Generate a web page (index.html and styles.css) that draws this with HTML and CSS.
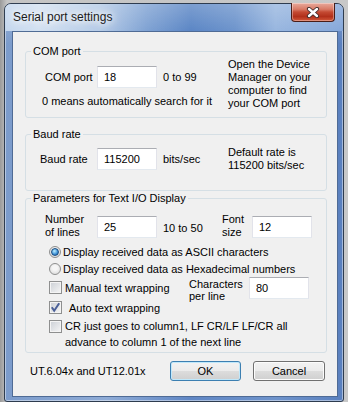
FILE: index.html
```html
<!DOCTYPE html>
<html lang="en">
<head>
  <meta charset="UTF-8" />
  <title>Serial port settings</title>
  <link rel="stylesheet" href="styles.css">
</head>
<body>

  <div class="window">
    <div class="titlebar">
      <span class="title">Serial port settings</span>
      <span class="close">
        <svg width="14" height="11" viewBox="0 0 14 11">
          <path d="M3 2 L11 9 M11 2 L3 9" stroke="#3d2a2a" stroke-width="4.2" stroke-linecap="round"/>
          <path d="M3 2 L11 9 M11 2 L3 9" stroke="#fff" stroke-width="2.4" stroke-linecap="round"/>
        </svg>
      </span>
    </div>

    <div class="client">

      <!-- COM port -->
      <fieldset class="group group-com">
        <legend>COM port</legend>
        <div class="cols">
          <div class="left">
            <div class="row row-com">
              <span class="lbl lbl-com">COM port</span>
              <span class="edit">18</span>
              <span class="hint">0 to 99</span>
            </div>
            <p class="note">0 means automatically search for it</p>
          </div>
          <p class="side">Open the Device<br>Manager on your<br>computer to find<br>your COM port</p>
        </div>
      </fieldset>

      <!-- Baud rate -->
      <fieldset class="group group-baud">
        <legend>Baud rate</legend>
        <div class="cols">
          <div class="left">
            <div class="row row-baud">
              <span class="lbl lbl-baud">Baud rate</span>
              <span class="edit">115200</span>
              <span class="hint">bits/sec</span>
            </div>
          </div>
          <p class="side side-baud">Default rate is<br>115200 bits/sec</p>
        </div>
      </fieldset>

      <!-- Text I/O -->
      <fieldset class="group group-text">
        <legend>Parameters for Text I/O Display</legend>

        <div class="row row-lines">
          <span class="lbl lbl-lines">Number<br>of lines</span>
          <span class="edit edit-mid">25</span>
          <span class="hint hint-lines">10 to 50</span>
          <span class="lbl lbl-font">Font<br>size</span>
          <span class="edit edit-mid">12</span>
        </div>

        <div class="option">
          <span class="radio checked"></span>
          <span class="opt-text">Display received data as ASCII characters</span>
        </div>
        <div class="option">
          <span class="radio"></span>
          <span class="opt-text">Display received data as Hexadecimal numbers</span>
        </div>

        <div class="row row-wrap">
          <div class="option option-manual">
            <span class="check"></span>
            <span class="opt-text">Manual text wrapping</span>
          </div>
          <span class="lbl lbl-chars">Characters<br>per line</span>
          <span class="edit">80</span>
        </div>

        <div class="option">
          <span class="check checked">
            <svg width="11" height="11" viewBox="0 0 11 11">
              <path d="M1.8 5.2 L4.2 8.8 L9.2 1.2" fill="none" stroke="#4a5f97" stroke-width="2"/>
            </svg>
          </span>
          <span class="opt-text opt-auto">Auto text wrapping</span>
        </div>

        <div class="option option-cr">
          <span class="check"></span>
          <span class="opt-text opt-cr">CR just goes to column1, LF CR/LF LF/CR all<br>advance to column 1 of the next line</span>
        </div>
      </fieldset>

      <div class="footer">
        <span class="version">UT.6.04x and UT12.01x</span>
        <span class="btn btn-default">OK</span>
        <span class="btn">Cancel</span>
      </div>

    </div>
  </div>

</body>
</html>
```

FILE: styles.css
```css
/* RESET */
* {
  margin: 0;
  padding: 0;
  box-sizing: border-box;
}

body {
  width: 348px;
  height: 402px;
  overflow: hidden;
  background: linear-gradient(to right, #9a9a9a, #c4c4c4 2%, #c8c8c8);
  font-family: "Liberation Sans", Arial, sans-serif;
  font-size: 11px;
  color: #000;
}

/* WINDOW FRAME */
.window {
  margin: 3px 0 0 4px;
  width: 340px;
  border: 1px solid #2e3c4f;
  border-radius: 7px 7px 3px 3px;
  padding: 0 5px 4px 7px;
  background: linear-gradient(to bottom, rgba(255,255,255,0.25), rgba(255,255,255,0) 40px),
              linear-gradient(to right, #7b9bcb 0%, #8eabd6 30%, #5f86c4 55%, #6e93cb 80%, #5a80be 100%);
  box-shadow: inset 0 0 0 1px rgba(255,255,255,0.45);
}

.titlebar {
  display: flex;
  height: 27px;
  margin: 0 -5px 0 -7px;
  padding: 0 8px 0 8px;
  border-radius: 6px 6px 0 0;
  background: linear-gradient(to bottom, rgba(255,255,255,0.2), rgba(255,255,255,0)),
              linear-gradient(to right, #c4d7ee 0%, #d3e1f1 10%, #b5cbe7 28%, #7fa2d3 42%, #5b86c5 55%, #6d94cc 68%, #98b6df 80%, #86a8da 100%);
}

.title {
  flex: 1;
  font-size: 12px;
  line-height: 27px;
  color: #1b1b1b;
  text-shadow: 0 0 6px #fff, 0 0 10px #fff, 0 0 14px rgba(255,255,255,0.8);
}

.close {
  display: flex;
  align-items: center;
  justify-content: center;
  width: 44px;
  height: 19px;
  margin-top: -1px;
  border: 1px solid #4a1d17;
  border-top: none;
  border-radius: 0 0 4px 4px;
  background: linear-gradient(to bottom, #e8aa9c 0%, #d97a66 35%, #c44a33 50%, #b2301b 75%, #d2583a 100%);
  box-shadow: inset 0 0 0 1px rgba(255,255,255,0.35);
}

/* CLIENT AREA */
.client {
  width: 326px;
  border: 1px solid #4f6b95;
  background: #f0f0f0;
  padding: 0 0 15px 0;
}

.group {
  width: 302px;
  margin-left: 12px;
  border: 1px solid #d5dfe5;
  border-radius: 3px;
  padding: 0;
}

.group legend {
  margin-left: 5px;
  padding: 0 2px;
  line-height: 13px;
}

.group-com {
  margin-top: 13px;
  padding-bottom: 7px;
}

.group-baud {
  margin-top: 10px;
  padding-bottom: 18px;
}

.group-text {
  margin-top: 1px;
  padding-bottom: 2px;
}

.cols {
  display: flex;
}

.left {
  width: 202px;
}

.side {
  line-height: 13px;
}

.side-baud {
  margin-top: 5px;
}

.row {
  display: flex;
  align-items: center;
}

.row-com {
  margin-top: 8px;
}

.row-baud {
  margin-top: 7px;
}

.lbl {
  display: block;
  line-height: 13px;
}

.lbl-com {
  width: 71px;
  padding-left: 19px;
}

.lbl-baud {
  width: 71px;
  padding-left: 14px;
}

.edit {
  display: flex;
  align-items: center;
  width: 60px;
  height: 22px;
  padding-left: 6px;
  background: #fff;
  border: 1px solid #e2e3ea;
  border-top-color: #abadb3;
  border-bottom-color: #e3e9ef;
}

.hint {
  margin-left: 6px;
}

.note {
  margin-top: 7px;
  padding-left: 16px;
  line-height: 13px;
}

/* TEXT I/O */
.row-lines {
  align-items: flex-start;
  margin-top: 8px;
}

.lbl-lines {
  width: 71px;
  padding-left: 19px;
}

.edit-mid {
  margin-top: 3px;
}

.hint-lines {
  width: 59px;
  margin-top: 9px;
}

.lbl-font {
  width: 30px;
}

.option {
  display: flex;
  align-items: center;
  height: 17px;
  padding-left: 23px;
}

.row-lines + .option {
  margin-top: 4px;
}

.radio {
  width: 12px;
  height: 12px;
  border-radius: 50%;
  border: 1px solid #8e8f8f;
  background: radial-gradient(circle at 50% 40%, #f6f6f6 30%, #d8d8d8 90%);
  display: flex;
  align-items: center;
  justify-content: center;
}

.radio.checked::after {
  content: "";
  width: 6px;
  height: 6px;
  border-radius: 50%;
  border: 1px solid #1c4d80;
  background: radial-gradient(circle at 40% 35%, #a9e1fb 10%, #3a8ed4 60%, #1d5796 100%);
}

.opt-text {
  margin-left: 2px;
}

.check {
  display: flex;
  align-items: center;
  justify-content: center;
  width: 13px;
  height: 13px;
  border: 1px solid #8e8f8f;
  background: linear-gradient(to bottom right, #cbcfd5, #f6f6f6);
  box-shadow: inset 0 0 0 1px #f4f4f4;
}

.check + .opt-text {
  margin-left: 3px;
}

.check + .opt-auto {
  margin-left: 7px;
}

.row-wrap {
  align-items: flex-start;
  height: 22px;
}

.option-manual {
  width: 163px;
  margin-top: 2px;
}

.lbl-chars {
  width: 60px;
  margin-top: 1px;
  line-height: 12px;
}

.option-cr {
  align-items: flex-start;
  height: auto;
  margin-top: 2px;
}

.option-cr .check {
  margin-top: 2px;
}

.opt-cr {
  line-height: 16px;
}

/* BUTTONS */
.footer {
  display: flex;
  align-items: center;
  margin-top: 8px;
  padding-left: 17px;
}

.version {
  width: 140px;
}

.btn {
  display: flex;
  align-items: center;
  justify-content: center;
  width: 72px;
  height: 20px;
  margin-right: 12px;
  border: 1px solid #707070;
  border-radius: 3px;
  background: linear-gradient(to bottom, #f2f2f2 0%, #ebebeb 50%, #dddddd 50%, #cfcfcf 100%);
  box-shadow: inset 0 0 0 1px #fcfcfc;
}

.btn-default {
  width: 71px;
  border-color: #3c7fb1;
  box-shadow: inset 0 0 0 1px #bfe8fb;
}
```
